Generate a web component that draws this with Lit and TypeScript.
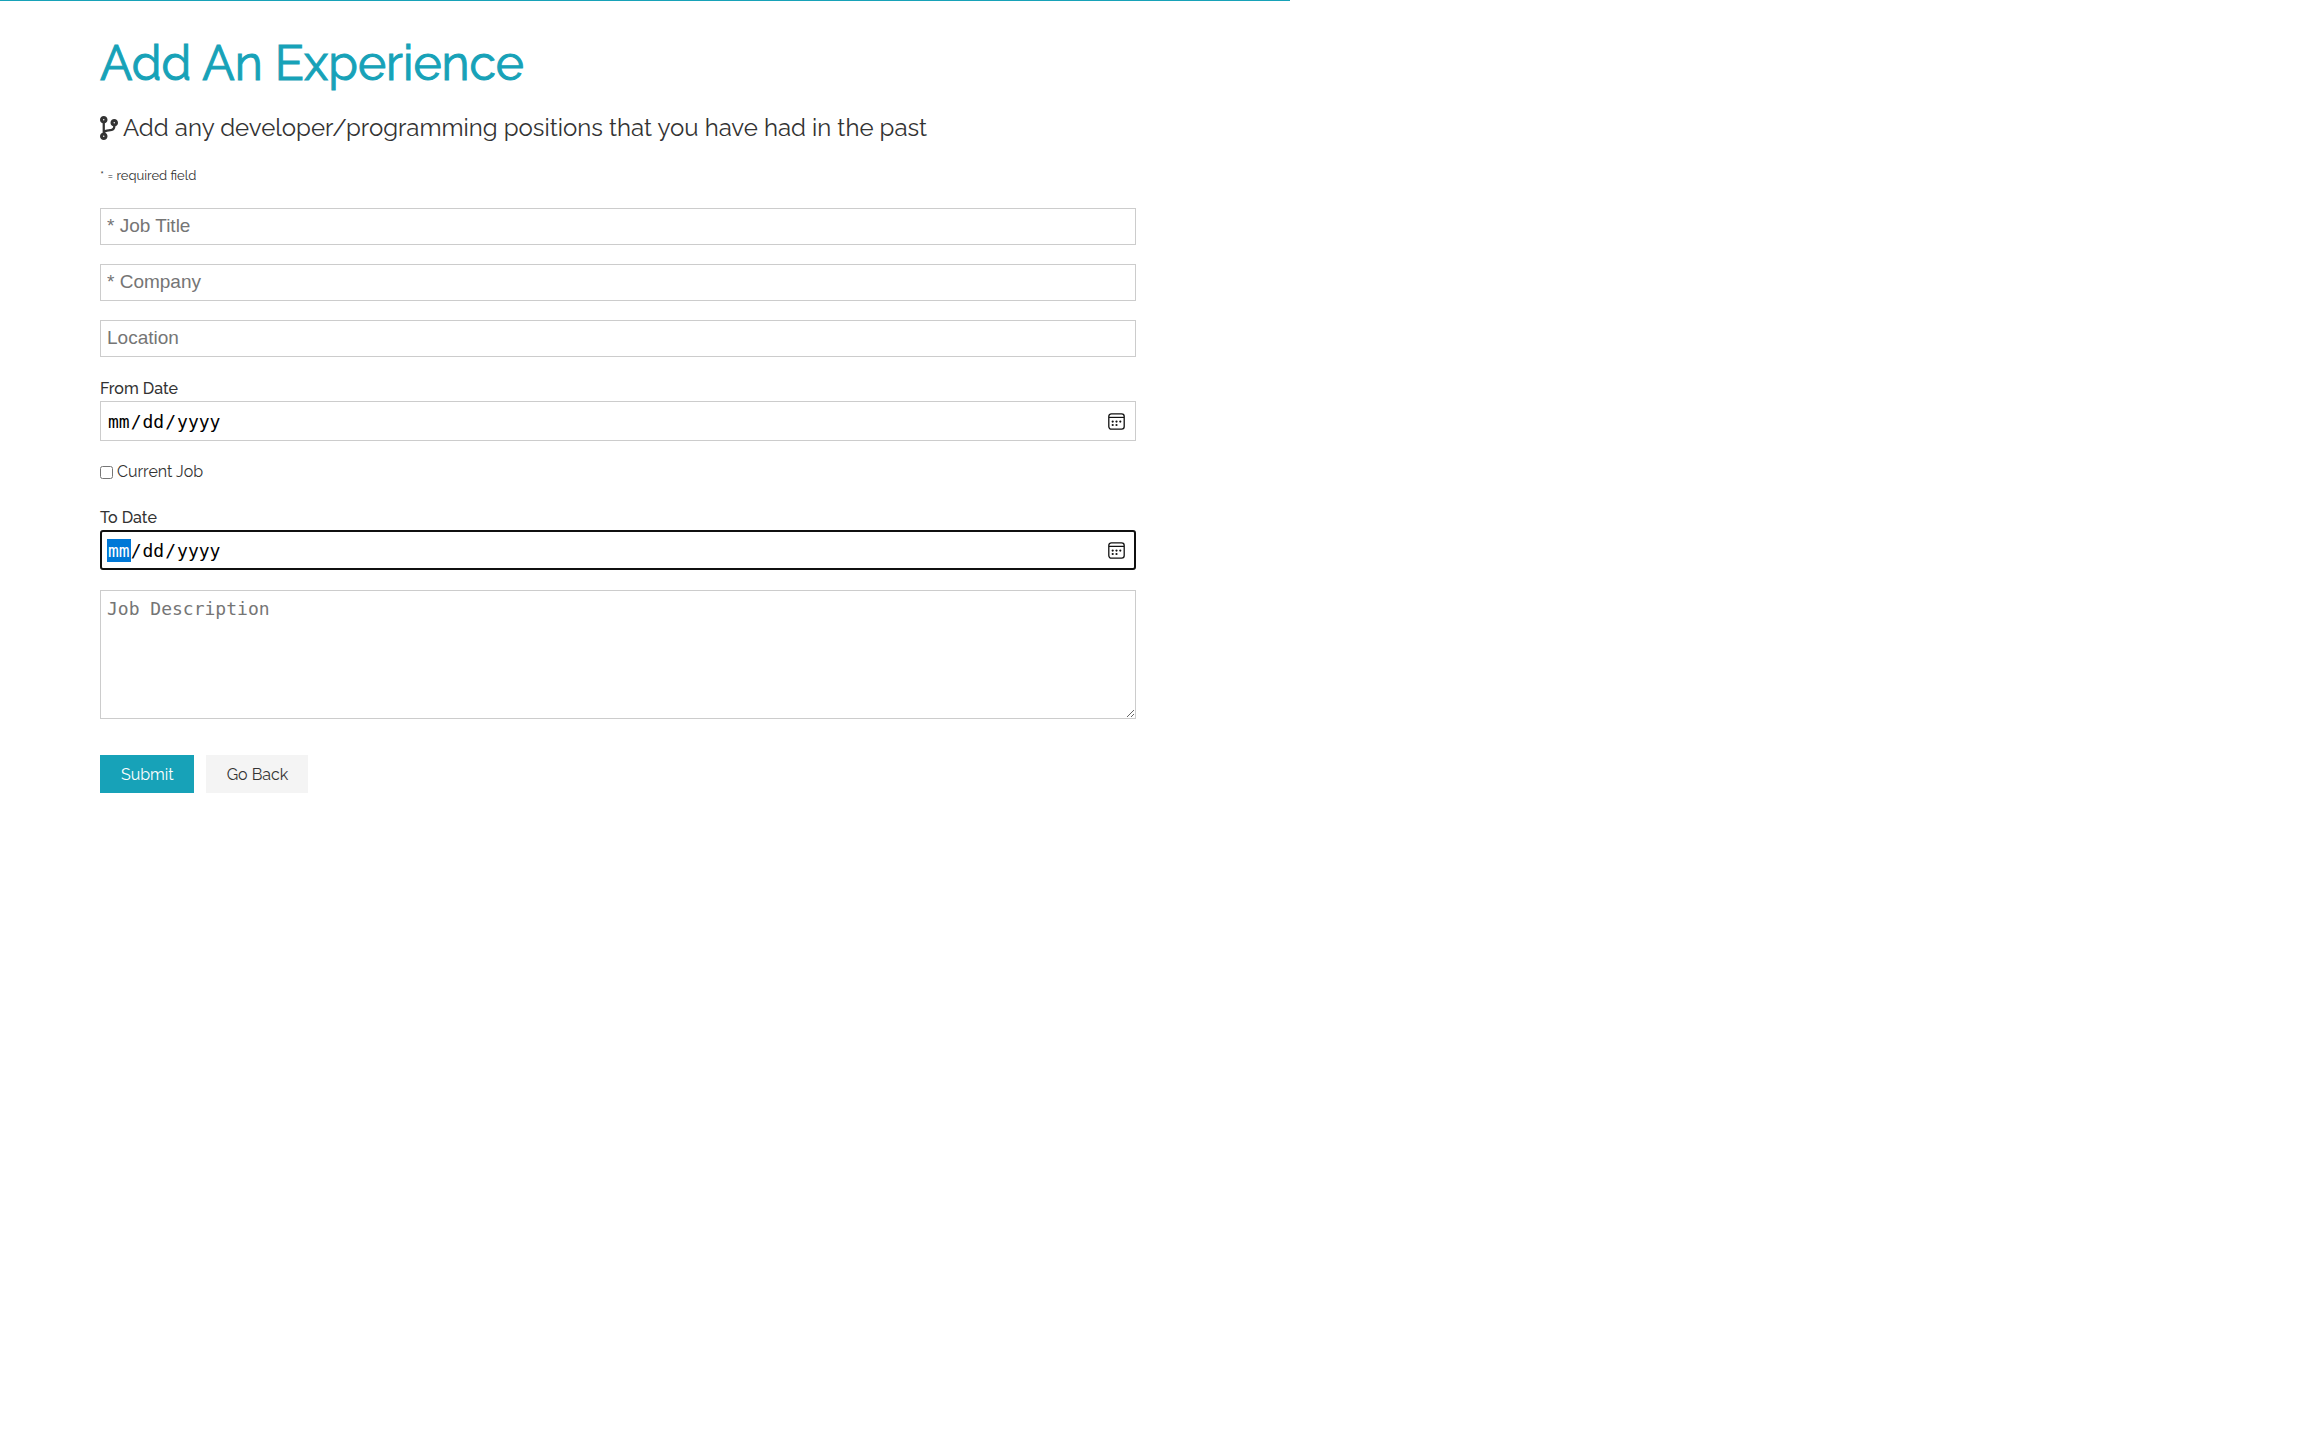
import { LitElement, html, css, unsafeCSS, svg } from "lit";
import { customElement } from "lit/decorators.js";

const calendarIcon = unsafeCSS(
  `url("data:image/svg+xml,%3Csvg xmlns='http://www.w3.org/2000/svg' viewBox='0 0 17 17'%3E%3Crect x='.8' y='.8' width='15.4' height='15.4' rx='2.6' fill='none' stroke='%23111' stroke-width='1.3'/%3E%3Cpath d='M1 4.4h15' stroke='%23111' stroke-width='1.2'/%3E%3Cg fill='%23111'%3E%3Ccircle cx='4.7' cy='8.6' r='1.1'/%3E%3Ccircle cx='8.5' cy='8.6' r='1.1'/%3E%3Ccircle cx='12.3' cy='8.6' r='1.1'/%3E%3Ccircle cx='4.7' cy='12' r='1.1'/%3E%3Ccircle cx='8.5' cy='12' r='1.1'/%3E%3C/g%3E%3C/svg%3E")`
);

const branchIcon = svg`<path fill="currentColor" d="M384 144c0-44.200-35.800-80-80-80s-80 35.800-80 80c0 36.400 24.300 67.100 57.500 76.800-.6 16.100-4.200 28.500-11 36.900-15.400 19.200-49.300 22.400-85.200 25.700-28.200 2.600-57.400 5.400-81.300 16.900v-144c32.500-10.200 56-40.500 56-76.300 0-44.200-35.800-80-80-80S0 35.800 0 80c0 35.800 23.500 66.100 56 76.300v199.300C23.500 365.900 0 396.200 0 432c0 44.200 35.800 80 80 80s80-35.800 80-80c0-34-21.200-63.100-51.200-74.600 3.100-5.200 7.800-9.800 14.900-13.400 16.200-8.200 40.400-10.400 66.100-12.800 42.200-3.900 90-8.400 118.200-43.400 14-17.400 21.100-39.800 21.600-67.900 31.600-10.800 54.400-40.700 54.400-75.900zM80 64c8.800 0 16 7.200 16 16s-7.200 16-16 16-16-7.200-16-16 7.200-16 16-16zm0 384c-8.800 0-16-7.200-16-16s7.200-16 16-16 16 7.200 16 16-7.200 16-16 16zm224-320c8.800 0 16 7.200 16 16s-7.200 16-16 16-16-7.200-16-16 7.200-16 16-16z"/>`;

@customElement("app-root")
export class AppRoot extends LitElement {
  static styles = css`
    :host {
      display: block;
      min-height: 100vh;
      background: #fff;
      color: #333;
      font-family: Raleway, Lato, sans-serif;
      font-size: 16px;
      font-weight: 400;
    }
    * { box-sizing: border-box; }
    .page { width: 56%; border-top: 1px solid #17a2b8; }
    .container { padding: 31px 154px 0 100px; }
    h1 {
      margin: 0;
      color: #17a2b8;
      font-size: 48px;
      line-height: 62px;
      font-weight: 400;
      -webkit-text-stroke: 1px #17a2b8;
    }
    .lead {
      display: flex;
      align-items: center;
      gap: 5px;
      margin: 17px 0 21px;
      font-size: 24px;
      line-height: 34px;
    }
    .lead svg { width: 18px; height: 24px; }
    small { display: block; font-size: 13px; line-height: 20px; margin-bottom: 22px; }
    form { display: flex; flex-direction: column; }
    input, textarea {
      display: block;
      width: 100%;
      margin: 0;
      padding: 5px 6px;
      border: 1px solid #ccc;
      border-radius: 0;
      background: #fff;
      outline: none;
    }
    ::placeholder { color: #757575; }
    .text {
      height: 37px;
      margin-bottom: 19px;
      padding: 4px 6px 6px;
      font: 19px "Liberation Sans", Arial, sans-serif;
    }
    .caption { font-weight: 500; line-height: 22px; margin: 2px 0 1px; }
    .date {
      height: 40px;
      margin-bottom: 20px;
      color: #000;
      font: 18px "DejaVu Sans Mono", monospace;
    }
    .date::-webkit-calendar-picker-indicator {
      width: 17px;
      height: 17px;
      padding: 0;
      margin-right: 4px;
      background: ${calendarIcon} center / 17px 17px no-repeat;
    }
    .active { border: 2px solid #101010; border-radius: 3px; padding: 4px 5px; }
    .active::-webkit-datetime-edit-month-field { background: #0078d7; color: #fff; }
    .check { display: flex; align-items: center; gap: 4px; line-height: 22px; margin-bottom: 22px; }
    .check input { width: 13px; height: 13px; }
    textarea {
      height: 129px;
      padding: 7px 6px;
      font: 18px "DejaVu Sans Mono", monospace;
      resize: both;
    }
    .actions { display: flex; gap: 12px; margin-top: 36px; }
    .btn {
      display: flex;
      align-items: center;
      height: 38px;
      border: 0;
      padding: 0 20px 0 21px;
      font: inherit;
      text-decoration: none;
      color: #333;
      background: #f4f4f4;
    }
    .primary { color: #fff; background: #17a2b8; }
  `;

  render() {
    return html`
      <main class="page">
        <div class="container">
          <h1>Add An Experience</h1>
          <p class="lead">
            <svg viewBox="0 0 384 512" aria-hidden="true">${branchIcon}</svg>
            <span>Add any developer/programming positions that you have had in the past</span>
          </p>
          <small>* = required field</small>
          <form>
            <input class="text" type="text" placeholder="* Job Title" aria-label="Job Title" required />
            <input class="text" type="text" placeholder="* Company" aria-label="Company" required />
            <input class="text" type="text" placeholder="Location" aria-label="Location" />
            <label class="caption" for="from">From Date</label>
            <input class="date" id="from" type="date" />
            <label class="check"><input type="checkbox" />Current Job</label>
            <label class="caption" for="to">To Date</label>
            <input class="date active" id="to" type="date" />
            <textarea placeholder="Job Description" aria-label="Job Description"></textarea>
            <div class="actions">
              <button class="btn primary" type="submit">Submit</button>
              <a class="btn" href="#dashboard">Go Back</a>
            </div>
          </form>
        </div>
      </main>
    `;
  }
}
